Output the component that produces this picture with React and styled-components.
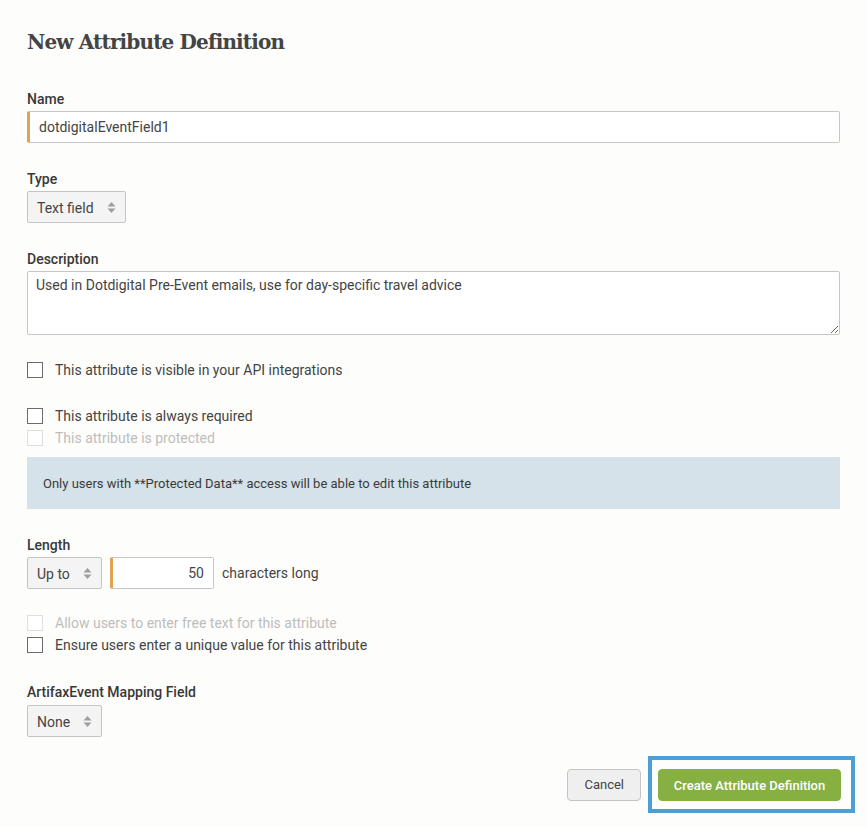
import styled, { createGlobalStyle } from 'styled-components';

const GlobalStyle = createGlobalStyle`
  body {
    margin: 0;
    background: #fdfdfb;
    font-family: Roboto, "Liberation Sans", sans-serif;
    color: #444;
  }
`;

const Page = styled.div`
  padding: 27px 27px 0 27px;
  display: flex;
  flex-direction: column;
`;

const Title = styled.h1`
  margin: 0 0 32px;
  font-family: "DejaVu Serif", "Liberation Serif", serif;
  font-size: 20px;
  line-height: 30px;
  font-weight: 700;
  color: #444;
  letter-spacing: -0.85px;
`;

const Field = styled.div`
  display: flex;
  flex-direction: column;
  align-items: flex-start;
  margin-bottom: ${(p) => p.$gap ?? 26}px;
`;

const Label = styled.label`
  font-size: 14px;
  line-height: 20px;
  font-weight: 500;
  color: #383838;
  margin-bottom: ${(p) => p.$gap ?? 2}px;
`;

const TextInput = styled.div`
  box-sizing: border-box;
  width: ${(p) => p.$width || '100%'};
  height: 32px;
  display: flex;
  align-items: center;
  justify-content: ${(p) => (p.$right ? 'flex-end' : 'flex-start')};
  padding: 0 9px;
  background: #fff;
  border: 1px solid #c6c6c6;
  border-left: 3px solid #e1a150;
  border-radius: 2px;
  font-size: 14px;
  color: #444;
`;

const TextArea = styled.textarea`
  box-sizing: border-box;
  width: 100%;
  height: 64px;
  padding: 5px 8px;
  background: #fff;
  border: 1px solid #c6c6c6;
  border-radius: 2px;
  font-family: Roboto, "Liberation Sans", sans-serif;
  font-size: 14px;
  color: #444;
  resize: vertical;
  outline: none;
`;

const SelectBox = styled.div`
  box-sizing: border-box;
  width: ${(p) => p.$width}px;
  height: 32px;
  display: flex;
  align-items: center;
  justify-content: space-between;
  padding: 1px 9px 0 9px;
  background: #f4f4f4;
  border: 1px solid #c4c4c4;
  border-radius: 2px;
  font-size: 14px;
  color: #444;
`;

const CheckRow = styled.div`
  display: flex;
  align-items: center;
  gap: 12px;
  height: 22px;
  font-size: 14px;
  color: ${(p) => (p.$disabled ? '#bdbdbd' : '#444')};
  margin-bottom: ${(p) => p.$gap ?? 0}px;
`;

const Box = styled.span`
  box-sizing: border-box;
  width: 16px;
  height: 16px;
  border: 1px solid ${(p) => (p.$disabled ? '#dedede' : '#6b6b6b')};
  background: #fff;
`;

const Notice = styled.div`
  box-sizing: border-box;
  height: 52px;
  margin: 8px 0 26px;
  display: flex;
  align-items: center;
  padding: 0 16px;
  background: #d6e2e9;
  font-size: 13px;
  color: #3a3a3a;
`;

const LengthRow = styled.div`
  display: flex;
  align-items: center;
  gap: 8px;
  font-size: 14px;
  color: #444;
  margin-bottom: 23px;
`;

const Footer = styled.div`
  display: flex;
  justify-content: flex-end;
  align-items: center;
  gap: 7px;
  margin-right: -15px;
`;

const Button = styled.button`
  box-sizing: border-box;
  height: 32px;
  padding: 0 ${(p) => (p.$primary ? 0 : 16)}px;
  flex: ${(p) => (p.$primary ? 1 : 'none')};
  white-space: nowrap;
  font-family: Roboto, "Liberation Sans", sans-serif;
  font-size: 13px;
  font-weight: ${(p) => (p.$primary ? 500 : 400)};
  color: ${(p) => (p.$primary ? '#fff' : '#444')};
  background: ${(p) => (p.$primary ? '#87b043' : '#efefef')};
  border: 1px solid ${(p) => (p.$primary ? '#87b043' : '#c4c4c4')};
  border-radius: 4px;
`;

const FocusRing = styled.div`
  box-sizing: border-box;
  width: 207px;
  height: 57px;
  padding: 9px 10px 8px 6px;
  border: 4px solid #4a9fd4;
  display: flex;
`;

const Arrows = () => (
  <svg width="9" height="13" viewBox="0 0 9 13">
    <path d="M4.5 1 L8.5 5.5 H0.5 Z" fill="#9e9e9e" />
    <path d="M4.5 12 L8.5 7.5 H0.5 Z" fill="#9e9e9e" />
  </svg>
);

const Select = ({ width, children }) => (
  <SelectBox $width={width}>
    <span>{children}</span>
    <Arrows />
  </SelectBox>
);

const Check = ({ disabled, gap, children }) => (
  <CheckRow $disabled={disabled} $gap={gap}>
    <Box $disabled={disabled} />
    <span>{children}</span>
  </CheckRow>
);

export default function App() {
  return (
    <>
      <GlobalStyle />
      <Page>
        <Title>New Attribute Definition</Title>

        <Field>
          <Label>Name</Label>
          <TextInput>dotdigitalEventField1</TextInput>
        </Field>

        <Field>
          <Label>Type</Label>
          <Select width={99}>Text field</Select>
        </Field>

        <Field $gap={24}>
          <Label>Description</Label>
          <TextArea defaultValue="Used in Dotdigital Pre-Event emails, use for day-specific travel advice" />
        </Field>

        <Check gap={24}>This attribute is visible in your API integrations</Check>
        <Check>This attribute is always required</Check>
        <Check disabled>This attribute is protected</Check>

        <Notice>Only users with **Protected Data** access will be able to edit this attribute</Notice>

        <Field $gap={0}>
          <Label>Length</Label>
        </Field>
        <LengthRow>
          <Select width={75}>Up to</Select>
          <TextInput $width="104px" $right>50</TextInput>
          <span>characters long</span>
        </LengthRow>

        <Check disabled>Allow users to enter free text for this attribute</Check>
        <Check gap={26}>Ensure users enter a unique value for this attribute</Check>

        <Field $gap={19}>
          <Label $gap={3}>ArtifaxEvent Mapping Field</Label>
          <Select width={75}>None</Select>
        </Field>

        <Footer>
          <Button>Cancel</Button>
          <FocusRing>
            <Button $primary>Create Attribute Definition</Button>
          </FocusRing>
        </Footer>
      </Page>
    </>
  );
}
